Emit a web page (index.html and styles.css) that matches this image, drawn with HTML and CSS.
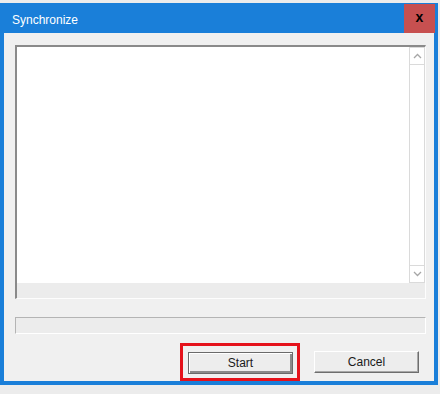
FILE: index.html
```html
<!DOCTYPE html>
<html lang="en">
<head>
  <meta charset="UTF-8">
  <title>Synchronize</title>
  <link rel="stylesheet" href="styles.css">
</head>
<body>
  <div class="window">
    <div class="titlebar">
      <span class="title">Synchronize</span>
      <span class="close">x</span>
    </div>
    <div class="content">
      <div class="listbox">
        <div class="list-main">
          <div class="list-area"></div>
          <div class="scrollbar">
            <div class="arrow up">
              <svg width="9" height="6" viewBox="0 0 9 6"><path d="M1 5 L4.5 1.5 L8 5" fill="none" stroke="#a6a6a6" stroke-width="1.3"/></svg>
            </div>
            <div class="track"></div>
            <div class="arrow down">
              <svg width="9" height="6" viewBox="0 0 9 6"><path d="M1 1 L4.5 4.5 L8 1" fill="none" stroke="#a6a6a6" stroke-width="1.3"/></svg>
            </div>
          </div>
        </div>
        <div class="list-footer"></div>
      </div>
      <div class="progress"></div>
      <div class="buttons">
        <div class="highlight">
          <button class="button default">Start</button>
        </div>
        <button class="button">Cancel</button>
      </div>
    </div>
  </div>
</body>
</html>
```

FILE: styles.css
```css
body {
  margin: 0;
  padding-top: 3px;
  background-color: #ececec;
  font-family: "Liberation Sans", Arial, sans-serif;
  width: 440px;
  height: 391px;
  overflow: hidden;
}
.window {
  width: 438px;
  display: flex;
  flex-direction: column;
}
.titlebar {
  height: 30px;
  background-color: #1a7fd9;
  display: flex;
  align-items: flex-start;
  justify-content: space-between;
}
.title {
  color: #fff;
  font-size: 12px;
  padding: 10px 0 0 12px;
}
.close {
  width: 31px;
  height: 29px;
  margin: 1px 3px 0 0;
  background-color: #c75050;
  color: #000;
  font-weight: bold;
  font-size: 14px;
  text-align: center;
  line-height: 26px;
}
.content {
  height: 352px;
  box-sizing: border-box;
  border: 4px solid #1a7fd9;
  border-top: none;
  background-color: #f0f0f0;
  padding: 12px 8px 0 11px;
  display: flex;
  flex-direction: column;
}
.listbox {
  height: 254px;
  box-sizing: border-box;
  border-top: 2px solid #8a8a8a;
  border-left: 2px solid #8a8a8a;
  border-right: 1px solid #fdfdfd;
  border-bottom: 1px solid #fdfdfd;
  display: flex;
  flex-direction: column;
}
.list-main {
  flex: 1;
  display: flex;
  background-color: #fff;
}
.list-area {
  flex: 1;
}
.scrollbar {
  width: 16px;
  box-sizing: border-box;
  border: 1px solid #dadada;
  display: flex;
  flex-direction: column;
}
.arrow {
  height: 16px;
  display: flex;
  align-items: center;
  justify-content: center;
}
.up {
  border-bottom: 1px solid #dadada;
}
.down {
  border-top: 1px solid #dadada;
}
.track {
  flex: 1;
}
.list-footer {
  height: 15px;
  background-color: #ececec;
}
.progress {
  margin-top: 18px;
  height: 17px;
  box-sizing: border-box;
  border-top: 1px solid #b4b4b4;
  border-left: 1px solid #b4b4b4;
  border-right: 1px solid #fff;
  border-bottom: 1px solid #fff;
  background-color: #ececec;
}
.buttons {
  margin-top: 9px;
  display: flex;
  justify-content: flex-end;
  align-items: center;
  gap: 14px;
  padding-right: 7px;
}
.highlight {
  border: 3px solid #e5121b;
  padding: 6px 4px 4px 5px;
}
.button {
  width: 105px;
  height: 22px;
  box-sizing: border-box;
  padding: 0;
  font-family: "Liberation Sans", Arial, sans-serif;
  font-size: 12px;
  color: #1a1a1a;
  background-color: #ededed;
  border: 1px solid;
  border-color: #fff #6e6e6e #6e6e6e #fff;
  box-shadow: inset -1px -1px 0 #a8a8a8;
}
.default {
  border: 1px solid #6a6a6a;
  box-shadow: inset 1px 1px 0 #fff, inset -2px -2px 0 #8a8a8a;
}
```
